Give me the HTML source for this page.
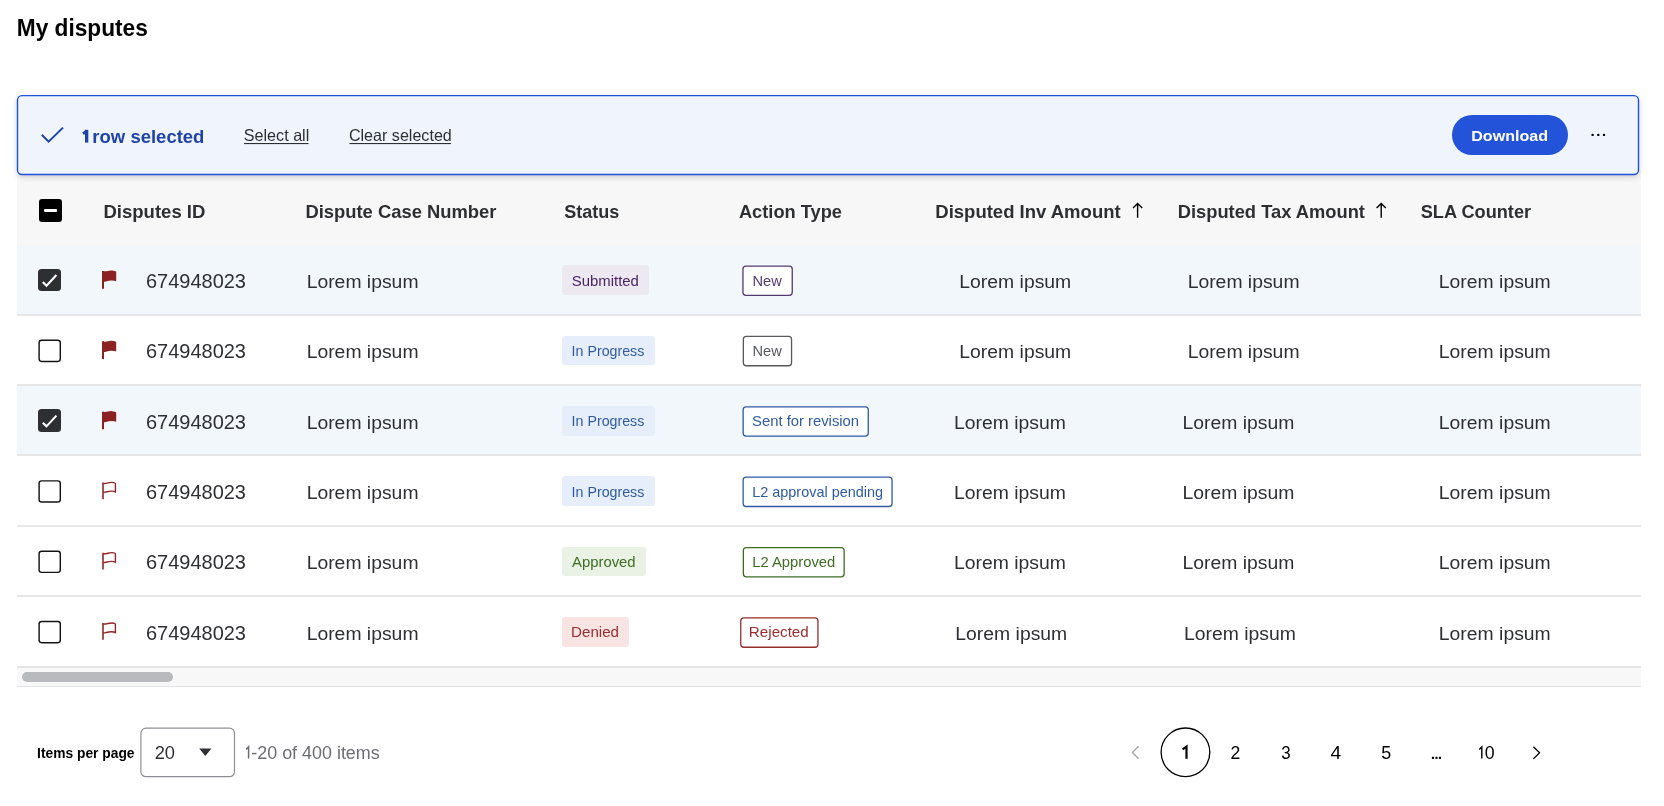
<!DOCTYPE html><html><head><meta charset="utf-8"><title>My disputes</title><style>
*{box-sizing:border-box;margin:0;padding:0}
html,body{width:1664px;height:806px;overflow:hidden;background:#fff;font-family:"Liberation Sans",sans-serif}
.a{position:absolute}
svg{position:absolute;left:0;top:0;will-change:transform}
text{font-family:"Liberation Sans",sans-serif}

</style></head><body>
<div class="a" style="left:17px;top:170px;width:1624px;height:75px;background:#f7f7f7"></div>
<div class="a" style="left:17px;top:245.00px;width:1624px;height:70.30px;background:#f2f7fc"></div>
<div class="a" style="left:17px;top:315.30px;width:1624px;height:70.30px;background:#fff"></div>
<div class="a" style="left:17px;top:385.60px;width:1624px;height:70.30px;background:#f2f7fc"></div>
<div class="a" style="left:17px;top:455.90px;width:1624px;height:70.30px;background:#fff"></div>
<div class="a" style="left:17px;top:526.20px;width:1624px;height:70.30px;background:#fff"></div>
<div class="a" style="left:17px;top:596.50px;width:1624px;height:70.30px;background:#fff"></div>
<div class="a" style="left:17px;top:313.80px;width:1624px;height:2px;background:#e6e7e8"></div>
<div class="a" style="left:17px;top:384.10px;width:1624px;height:2px;background:#e6e7e8"></div>
<div class="a" style="left:17px;top:454.40px;width:1624px;height:2px;background:#e6e7e8"></div>
<div class="a" style="left:17px;top:524.70px;width:1624px;height:2px;background:#e6e7e8"></div>
<div class="a" style="left:17px;top:595.00px;width:1624px;height:2px;background:#e6e7e8"></div>
<div class="a" style="left:17px;top:666px;width:1624px;height:21px;background:#f8f8f8;border-top:2px solid #e4e5e6;border-bottom:1px solid #e2e3e4"></div>
<div class="a" style="left:22px;top:672px;width:151px;height:10px;border-radius:5px;background:#b9babe"></div>
<div class="a" style="left:17px;top:95px;width:1622px;height:80px;background:#eff4fd;border-radius:5px;box-shadow:0 2px 6px rgba(0,0,0,.17)"></div>
<div class="a" style="left:1451.5px;top:115px;width:116.5px;height:40px;border-radius:20px;background:#2253d9"></div>
<div class="a" style="left:39px;top:199px;width:22.5px;height:22.5px;border-radius:3px;background:#000"></div>
<div class="a" style="left:44px;top:209px;width:13px;height:2.5px;border-radius:1px;background:#fff"></div>
<div class="a" style="left:38.4px;top:268.85px;width:22.6px;height:22.6px;border-radius:3.5px;background:#2e2f32"></div>
<div class="a" style="left:38.4px;top:409.45px;width:22.6px;height:22.6px;border-radius:3.5px;background:#2e2f32"></div>
<div class="a" style="left:562.1px;top:265.35px;width:87.1px;height:29.8px;border-radius:3px;background:#ede9f1"></div>
<div class="a" style="left:561.9px;top:335.65px;width:93.0px;height:29.8px;border-radius:3px;background:#e5eefa"></div>
<div class="a" style="left:561.9px;top:405.95px;width:93.0px;height:29.8px;border-radius:3px;background:#e5eefa"></div>
<div class="a" style="left:561.9px;top:476.25px;width:93.0px;height:29.8px;border-radius:3px;background:#e5eefa"></div>
<div class="a" style="left:561.9px;top:546.55px;width:83.9px;height:29.8px;border-radius:3px;background:#e9f2e4"></div>
<div class="a" style="left:561.9px;top:616.85px;width:67.5px;height:29.8px;border-radius:3px;background:#f9e4e4"></div>
<svg width="1664" height="806" viewBox="0 0 1664 806"><rect x="17.5" y="95.6" width="1621" height="78.85" rx="4.5" fill="none" stroke="#2150d9" stroke-width="1.4"/><path d="M41.8 134.8 L48.6 141.6 L63 127.6" fill="none" stroke="#1f43a6" stroke-width="2"/><circle cx="1592.6" cy="134.9" r="1.2" fill="#000"/><circle cx="1598.3" cy="134.9" r="1.2" fill="#000"/><circle cx="1604.0" cy="134.9" r="1.2" fill="#000"/><rect x="244" y="143" width="64.5" height="1.1" fill="#2e2f32"/><rect x="349.5" y="143" width="101.5" height="1.1" fill="#2e2f32"/><path d="M1137.6 217.7 V203.8 M1133.0 208 L1137.6 203.4 L1142.1999999999998 208" fill="none" stroke="#000" stroke-width="1.4"/><path d="M1381.2 217.7 V203.8 M1376.6000000000001 208 L1381.2 203.4 L1385.8 208" fill="none" stroke="#000" stroke-width="1.4"/><path d="M42.8 282.05 L46.5 285.75 L56.4 275.05" fill="none" stroke="#fff" stroke-width="2.1"/><path d="M103 288.75 V271.05" stroke="#8c2121" stroke-width="2"/><path d="M103 271.05 C106 272.05 109 270.05 112 270.55 C114 270.85 115.5 271.05 116.2 271.85 L116.2 281.25 C113 279.95 109 280.45 106 281.45 C105 281.75 104 281.75 103 281.75 Z" fill="#8c2121"/><rect x="39.1" y="340.25" width="21.2" height="21.2" rx="2.6" fill="#fff" stroke="#141414" stroke-width="1.45"/><path d="M103 359.05 V341.35" stroke="#8c2121" stroke-width="2"/><path d="M103 341.35 C106 342.35 109 340.35 112 340.85 C114 341.15 115.5 341.35 116.2 342.15 L116.2 351.55 C113 350.25 109 350.75 106 351.75 C105 352.05 104 352.05 103 352.05 Z" fill="#8c2121"/><path d="M42.8 422.65 L46.5 426.35 L56.4 415.65" fill="none" stroke="#fff" stroke-width="2.1"/><path d="M103 429.35 V411.65" stroke="#8c2121" stroke-width="2"/><path d="M103 411.65 C106 412.65 109 410.65 112 411.15 C114 411.45 115.5 411.65 116.2 412.45 L116.2 421.85 C113 420.55 109 421.05 106 422.05 C105 422.35 104 422.35 103 422.35 Z" fill="#8c2121"/><rect x="39.1" y="480.85" width="21.2" height="21.2" rx="2.6" fill="#fff" stroke="#141414" stroke-width="1.45"/><path d="M103 499.15 V482.45" stroke="#922626" stroke-width="1.6"/><path d="M103.2 483.35 C106 483.95 109 482.15 112 482.35 C114 482.55 115.4 482.75 115.4 483.55 L115.4 491.95 C113 490.55 109 491.15 106 491.95 C105 492.25 104 492.35 103.2 492.35" fill="none" stroke="#922626" stroke-width="1.4"/><rect x="39.1" y="551.15" width="21.2" height="21.2" rx="2.6" fill="#fff" stroke="#141414" stroke-width="1.45"/><path d="M103 569.45 V552.75" stroke="#922626" stroke-width="1.6"/><path d="M103.2 553.65 C106 554.25 109 552.45 112 552.65 C114 552.85 115.4 553.05 115.4 553.85 L115.4 562.25 C113 560.85 109 561.45 106 562.25 C105 562.55 104 562.65 103.2 562.65" fill="none" stroke="#922626" stroke-width="1.4"/><rect x="39.1" y="621.45" width="21.2" height="21.2" rx="2.6" fill="#fff" stroke="#141414" stroke-width="1.45"/><path d="M103 639.75 V623.05" stroke="#922626" stroke-width="1.6"/><path d="M103.2 623.95 C106 624.55 109 622.75 112 622.95 C114 623.15 115.4 623.35 115.4 624.15 L115.4 632.55 C113 631.15 109 631.75 106 632.55 C105 632.85 104 632.95 103.2 632.95" fill="none" stroke="#922626" stroke-width="1.4"/><rect x="742.95" y="266.05" width="49.30" height="29.3" rx="3" fill="#fff" stroke="#553a72" stroke-width="1.3"/><rect x="743.35" y="336.43" width="48.20" height="29.3" rx="3" fill="#fff" stroke="#58595d" stroke-width="1.3"/><rect x="743.15" y="406.81" width="125.10" height="29.3" rx="3" fill="#fff" stroke="#2f5ba3" stroke-width="1.3"/><rect x="743.15" y="477.19" width="148.90" height="29.3" rx="3" fill="#fff" stroke="#2f5ba3" stroke-width="1.3"/><rect x="743.35" y="547.57" width="100.80" height="29.3" rx="3" fill="#fff" stroke="#3f6d24" stroke-width="1.3"/><rect x="740.75" y="617.95" width="77.20" height="29.3" rx="3" fill="#fff" stroke="#9a2d2d" stroke-width="1.3"/><path d="M199.2 748.4 L211.4 748.4 L205.3 756 Z" fill="#2e2f32"/><rect x="140.9" y="728.2" width="93.6" height="48.5" rx="5" fill="none" stroke="#8e8f94" stroke-width="1.2"/><circle cx="1185.45" cy="752.35" r="24.35" fill="none" stroke="#000" stroke-width="1.3"/><path d="M1186.5 758.7 V746.6 L1182.6 749.4" fill="none" stroke="#000" stroke-width="2.2" stroke-linejoin="miter"/><rect x="85" y="129.8" width="3.3" height="12.8" fill="#1f43a6"/><path d="M83.1 133.9 L86.6 130.8" stroke="#1f43a6" stroke-width="2.8"/><path d="M248.6 758.6 V746.9 L246.1 749.4" fill="none" stroke="#6d6e73" stroke-width="1.5"/><path d="M1481.8 758.6 V746.9 L1479.2 749.4" fill="none" stroke="#000" stroke-width="1.4"/><path d="M1138.6 746.3 L1132.4 752.5 L1138.6 758.7" fill="none" stroke="#a3a4a8" stroke-width="1.3"/><path d="M1533.4 746.7 L1539.6 752.8 L1533.4 758.9" fill="none" stroke="#000" stroke-width="1.3"/><rect x="1431.90" y="756.8" width="2.1" height="2.1" fill="#000"/><rect x="1435.40" y="756.8" width="2.1" height="2.1" fill="#000"/><rect x="1438.90" y="756.8" width="2.1" height="2.1" fill="#000"/><text x="16.74" y="35.70" font-size="24.5" font-weight="700" fill="#000" textLength="131.08" lengthAdjust="spacingAndGlyphs">My disputes</text><text x="92.39" y="142.50" font-size="18" font-weight="700" fill="#1f43a6" textLength="112.03" lengthAdjust="spacingAndGlyphs">row selected</text><text x="243.75" y="141.30" font-size="16.5" font-weight="400" fill="#2e2f32" textLength="65.55" lengthAdjust="spacingAndGlyphs">Select all</text><text x="348.90" y="141.30" font-size="16.5" font-weight="400" fill="#2e2f32" textLength="102.91" lengthAdjust="spacingAndGlyphs">Clear selected</text><text x="1471.23" y="141.20" font-size="15.5" font-weight="700" fill="#fff" textLength="76.84" lengthAdjust="spacingAndGlyphs">Download</text><text x="103.49" y="217.80" font-size="19" font-weight="700" fill="#2e2f32" textLength="101.91" lengthAdjust="spacingAndGlyphs">Disputes ID</text><text x="305.40" y="217.80" font-size="19" font-weight="700" fill="#2e2f32" textLength="191.07" lengthAdjust="spacingAndGlyphs">Dispute Case Number</text><text x="564.24" y="217.80" font-size="19" font-weight="700" fill="#2e2f32" textLength="55.11" lengthAdjust="spacingAndGlyphs">Status</text><text x="738.94" y="217.80" font-size="19" font-weight="700" fill="#2e2f32" textLength="103.04" lengthAdjust="spacingAndGlyphs">Action Type</text><text x="935.29" y="217.80" font-size="19" font-weight="700" fill="#2e2f32" textLength="185.36" lengthAdjust="spacingAndGlyphs">Disputed Inv Amount</text><text x="1177.70" y="217.80" font-size="19" font-weight="700" fill="#2e2f32" textLength="187.25" lengthAdjust="spacingAndGlyphs">Disputed Tax Amount</text><text x="1420.74" y="217.80" font-size="19" font-weight="700" fill="#2e2f32" textLength="110.33" lengthAdjust="spacingAndGlyphs">SLA Counter</text><text x="145.90" y="288.15" font-size="20.4" font-weight="400" fill="#2e2f32" textLength="100.12" lengthAdjust="spacingAndGlyphs">674948023</text><text x="306.65" y="288.15" font-size="18.8" font-weight="400" fill="#2e2f32" textLength="111.87" lengthAdjust="spacingAndGlyphs">Lorem ipsum</text><text x="959.35" y="288.15" font-size="18.8" font-weight="400" fill="#2e2f32" textLength="111.87" lengthAdjust="spacingAndGlyphs">Lorem ipsum</text><text x="1187.65" y="288.15" font-size="18.8" font-weight="400" fill="#2e2f32" textLength="111.87" lengthAdjust="spacingAndGlyphs">Lorem ipsum</text><text x="1438.85" y="288.15" font-size="18.8" font-weight="400" fill="#2e2f32" textLength="111.87" lengthAdjust="spacingAndGlyphs">Lorem ipsum</text><text x="145.90" y="358.45" font-size="20.4" font-weight="400" fill="#2e2f32" textLength="100.12" lengthAdjust="spacingAndGlyphs">674948023</text><text x="306.65" y="358.45" font-size="18.8" font-weight="400" fill="#2e2f32" textLength="111.87" lengthAdjust="spacingAndGlyphs">Lorem ipsum</text><text x="959.35" y="358.45" font-size="18.8" font-weight="400" fill="#2e2f32" textLength="111.87" lengthAdjust="spacingAndGlyphs">Lorem ipsum</text><text x="1187.65" y="358.45" font-size="18.8" font-weight="400" fill="#2e2f32" textLength="111.87" lengthAdjust="spacingAndGlyphs">Lorem ipsum</text><text x="1438.85" y="358.45" font-size="18.8" font-weight="400" fill="#2e2f32" textLength="111.87" lengthAdjust="spacingAndGlyphs">Lorem ipsum</text><text x="145.90" y="428.75" font-size="20.4" font-weight="400" fill="#2e2f32" textLength="100.12" lengthAdjust="spacingAndGlyphs">674948023</text><text x="306.65" y="428.75" font-size="18.8" font-weight="400" fill="#2e2f32" textLength="111.87" lengthAdjust="spacingAndGlyphs">Lorem ipsum</text><text x="954.05" y="428.75" font-size="18.8" font-weight="400" fill="#2e2f32" textLength="111.87" lengthAdjust="spacingAndGlyphs">Lorem ipsum</text><text x="1182.45" y="428.75" font-size="18.8" font-weight="400" fill="#2e2f32" textLength="111.87" lengthAdjust="spacingAndGlyphs">Lorem ipsum</text><text x="1438.85" y="428.75" font-size="18.8" font-weight="400" fill="#2e2f32" textLength="111.87" lengthAdjust="spacingAndGlyphs">Lorem ipsum</text><text x="145.90" y="499.05" font-size="20.4" font-weight="400" fill="#2e2f32" textLength="100.12" lengthAdjust="spacingAndGlyphs">674948023</text><text x="306.65" y="499.05" font-size="18.8" font-weight="400" fill="#2e2f32" textLength="111.87" lengthAdjust="spacingAndGlyphs">Lorem ipsum</text><text x="954.05" y="499.05" font-size="18.8" font-weight="400" fill="#2e2f32" textLength="111.87" lengthAdjust="spacingAndGlyphs">Lorem ipsum</text><text x="1182.45" y="499.05" font-size="18.8" font-weight="400" fill="#2e2f32" textLength="111.87" lengthAdjust="spacingAndGlyphs">Lorem ipsum</text><text x="1438.85" y="499.05" font-size="18.8" font-weight="400" fill="#2e2f32" textLength="111.87" lengthAdjust="spacingAndGlyphs">Lorem ipsum</text><text x="145.90" y="569.35" font-size="20.4" font-weight="400" fill="#2e2f32" textLength="100.12" lengthAdjust="spacingAndGlyphs">674948023</text><text x="306.65" y="569.35" font-size="18.8" font-weight="400" fill="#2e2f32" textLength="111.87" lengthAdjust="spacingAndGlyphs">Lorem ipsum</text><text x="954.05" y="569.35" font-size="18.8" font-weight="400" fill="#2e2f32" textLength="111.87" lengthAdjust="spacingAndGlyphs">Lorem ipsum</text><text x="1182.45" y="569.35" font-size="18.8" font-weight="400" fill="#2e2f32" textLength="111.87" lengthAdjust="spacingAndGlyphs">Lorem ipsum</text><text x="1438.85" y="569.35" font-size="18.8" font-weight="400" fill="#2e2f32" textLength="111.87" lengthAdjust="spacingAndGlyphs">Lorem ipsum</text><text x="145.90" y="639.65" font-size="20.4" font-weight="400" fill="#2e2f32" textLength="100.12" lengthAdjust="spacingAndGlyphs">674948023</text><text x="306.65" y="639.65" font-size="18.8" font-weight="400" fill="#2e2f32" textLength="111.87" lengthAdjust="spacingAndGlyphs">Lorem ipsum</text><text x="955.35" y="639.65" font-size="18.8" font-weight="400" fill="#2e2f32" textLength="111.87" lengthAdjust="spacingAndGlyphs">Lorem ipsum</text><text x="1184.05" y="639.65" font-size="18.8" font-weight="400" fill="#2e2f32" textLength="111.87" lengthAdjust="spacingAndGlyphs">Lorem ipsum</text><text x="1438.85" y="639.65" font-size="18.8" font-weight="400" fill="#2e2f32" textLength="111.87" lengthAdjust="spacingAndGlyphs">Lorem ipsum</text><text x="571.70" y="285.60" font-size="15" font-weight="400" fill="#4b2466" textLength="67.24" lengthAdjust="spacingAndGlyphs">Submitted</text><text x="752.53" y="285.60" font-size="15" font-weight="400" fill="#553a72" textLength="29.26" lengthAdjust="spacingAndGlyphs">New</text><text x="571.62" y="355.90" font-size="15" font-weight="400" fill="#2f5ba3" textLength="72.71" lengthAdjust="spacingAndGlyphs">In Progress</text><text x="752.53" y="355.90" font-size="15" font-weight="400" fill="#58595d" textLength="29.26" lengthAdjust="spacingAndGlyphs">New</text><text x="571.62" y="426.20" font-size="15" font-weight="400" fill="#2f5ba3" textLength="72.71" lengthAdjust="spacingAndGlyphs">In Progress</text><text x="752.11" y="426.20" font-size="15" font-weight="400" fill="#2f5ba3" textLength="106.92" lengthAdjust="spacingAndGlyphs">Sent for revision</text><text x="571.62" y="496.50" font-size="15" font-weight="400" fill="#2f5ba3" textLength="72.71" lengthAdjust="spacingAndGlyphs">In Progress</text><text x="752.14" y="496.50" font-size="15" font-weight="400" fill="#2f5ba3" textLength="130.97" lengthAdjust="spacingAndGlyphs">L2 approval pending</text><text x="572.00" y="566.80" font-size="15" font-weight="400" fill="#3f6d24" textLength="63.63" lengthAdjust="spacingAndGlyphs">Approved</text><text x="752.23" y="566.80" font-size="15" font-weight="400" fill="#3f6d24" textLength="83.10" lengthAdjust="spacingAndGlyphs">L2 Approved</text><text x="571.09" y="637.10" font-size="15" font-weight="400" fill="#9a2d2d" textLength="47.96" lengthAdjust="spacingAndGlyphs">Denied</text><text x="748.89" y="637.10" font-size="15" font-weight="400" fill="#9a2d2d" textLength="59.87" lengthAdjust="spacingAndGlyphs">Rejected</text><text x="37.07" y="757.70" font-size="15" font-weight="700" fill="#000" textLength="97.49" lengthAdjust="spacingAndGlyphs">Items per page</text><text x="154.68" y="759.00" font-size="18" font-weight="400" fill="#2e2f32" textLength="20.38" lengthAdjust="spacingAndGlyphs">20</text><text x="251.28" y="758.80" font-size="17.5" font-weight="400" fill="#6d6e73" textLength="128.45" lengthAdjust="spacingAndGlyphs">-20 of 400 items</text><text x="1230.52" y="758.80" font-size="17.5" font-weight="400" fill="#000" textLength="9.79" lengthAdjust="spacingAndGlyphs">2</text><text x="1281.19" y="758.80" font-size="17.5" font-weight="400" fill="#000" textLength="9.42" lengthAdjust="spacingAndGlyphs">3</text><text x="1330.62" y="758.80" font-size="17.5" font-weight="400" fill="#000" textLength="10.69" lengthAdjust="spacingAndGlyphs">4</text><text x="1381.38" y="758.80" font-size="17.5" font-weight="400" fill="#000" textLength="9.96" lengthAdjust="spacingAndGlyphs">5</text><text x="1484.67" y="758.80" font-size="17.5" font-weight="400" fill="#000" textLength="9.87" lengthAdjust="spacingAndGlyphs">0</text></svg>
</body></html>
